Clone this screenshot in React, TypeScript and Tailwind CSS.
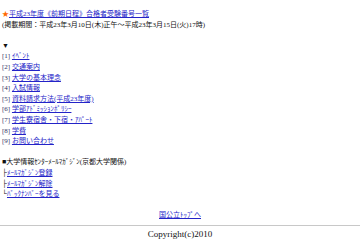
const LINK = 'text-[#2323c8] underline'

const MENU = [
  'ｲﾍﾞﾝﾄ',
  '交通案内',
  '大学の基本理念',
  '入試情報',
  '資料請求方法(平成23年度)',
  '学部ｱﾄﾞﾐｯｼｮﾝﾎﾟﾘｼｰ',
  '学生寮宿舎・下宿・ｱﾊﾟｰﾄ',
  '学費',
  'お問い合わせ',
]

export default function App() {
  return (
    <div
      className="w-[360px] h-[240px] overflow-hidden bg-white text-[#111] text-[7px] leading-[10.6px] pt-[9px]"
      style={{ fontFamily: '"Liberation Serif", "Noto Sans CJK JP", serif' }}
    >
      <div className="px-[2px]">
        <div>
          <span className="text-[#ff6a00]">★</span>
          <a className={LINK}>平成23年度《前期日程》合格者受験番号一覧</a>
        </div>
        <div>(掲載期間：平成23年3月10日(木)正午～平成23年3月15日(火)17時)</div>
        <div>&nbsp;</div>
        <div>▼</div>
        {MENU.map((m, i) => (
          <div key={i}>
            <span className="text-[#333366]">[{i + 1}]</span> <a className={LINK}>{m}</a>
          </div>
        ))}
        <div>&nbsp;</div>
        <div>■大学情報ｾﾝﾀｰﾒｰﾙﾏｶﾞｼﾞﾝ(京都大学関係)</div>
        <div>├<a className={LINK}>ﾒｰﾙﾏｶﾞｼﾞﾝ登録</a></div>
        <div>├<a className={LINK}>ﾒｰﾙﾏｶﾞｼﾞﾝ解除</a></div>
        <div>└<a className={LINK}>ﾊﾞｯｸﾅﾝﾊﾞｰを見る</a></div>
        <div>&nbsp;</div>
        <div className="text-center">
          <a className={LINK}>国公立ﾄｯﾌﾟへ</a>
        </div>
      </div>
      <div className="mt-[4px] border-t border-[#c8c8c8]" />
      <div className="mt-[2px] text-center text-[9px] leading-[12px]">Copyright(c)2010</div>
    </div>
  )
}
